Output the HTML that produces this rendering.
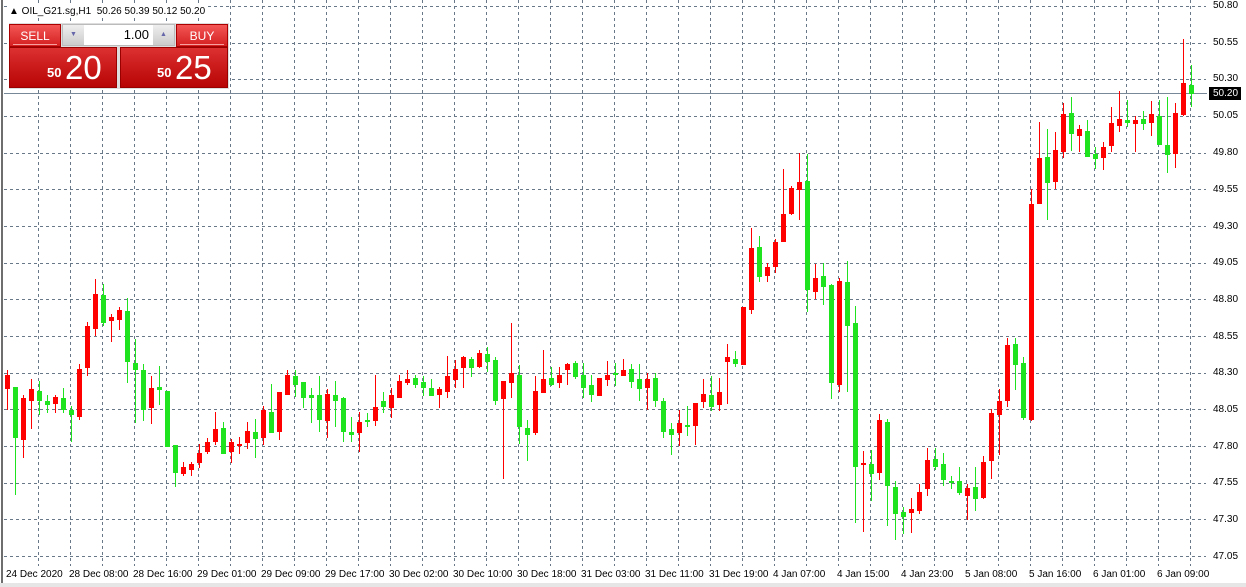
<!DOCTYPE html>
<html><head><meta charset="utf-8"><style>
*{margin:0;padding:0;box-sizing:border-box}
body{width:1246px;height:587px;background:#fff;position:relative;overflow:hidden;font-family:"Liberation Sans",sans-serif;font-size:10px;color:#000}
svg{position:absolute;left:0;top:0}
.pl{position:absolute;left:1213px;font-size:10px;line-height:12px}
.tl{position:absolute;top:569px;font-size:10px;line-height:12px;white-space:nowrap}
#title{position:absolute;left:9px;top:6px;font-size:10px;line-height:12px;white-space:nowrap;background:#fff}
.btn{position:absolute;top:24px;height:23px;background:linear-gradient(#f45656,#d42020);color:#fff;font-size:12px;text-align:center;line-height:22px;border:1px solid #a00}
.big{position:absolute;top:47px;height:41px;background:linear-gradient(#dc3030,#b80404);color:#fff;border:1px solid #900}
.big b{position:absolute;font-size:13px;top:17px}
.big span{position:absolute;font-size:33px;top:1px;line-height:38px}
</style></head><body>
<svg width="1246" height="587" id="s"></svg>
<div id="title">▲ OIL_G21.sg,H1&nbsp; 50.26 50.39 50.12 50.20</div>
<div style="position:absolute;left:9px;top:23px;width:220px;height:66px;background:#ddd"></div>
<div class="btn" style="left:9px;width:52px">SELL<div style="position:absolute;left:3px;right:3px;bottom:1px;height:1px;background:#f7a0a0"></div></div>
<div class="btn" style="left:176px;width:52px">BUY<div style="position:absolute;left:3px;right:3px;bottom:1px;height:1px;background:#f7a0a0"></div></div>
<div style="position:absolute;left:62px;top:24px;width:113px;height:22px;background:#fff;border:1px solid #bbb"></div>
<div style="position:absolute;left:63px;top:25px;width:21px;height:20px;background:linear-gradient(#eee,#ccc);font-size:7px;color:#66a;text-align:center;line-height:20px">▼</div>
<div style="position:absolute;left:153px;top:25px;width:21px;height:20px;background:linear-gradient(#eee,#ccc);font-size:7px;color:#66a;text-align:center;line-height:20px">▲</div>
<div style="position:absolute;left:84px;top:26px;width:65px;font-size:13px;text-align:right;line-height:18px">1.00</div>
<div class="big" style="left:9px;width:108px"><b style="left:37px">50</b><span style="left:55px">20</span></div>
<div class="big" style="left:120px;width:108px"><b style="left:36px">50</b><span style="left:54px">25</span></div>
<div style="position:absolute;left:1209px;top:87px;width:32px;height:13px;background:#000"></div>
<div class="pl" style="top:0px">50.80</div><div class="pl" style="top:37px">50.55</div><div class="pl" style="top:73px">50.30</div>
<div class="pl" style="top:88px;color:#fff">50.20</div>
<div class="pl" style="top:110px">50.05</div><div class="pl" style="top:147px">49.80</div><div class="pl" style="top:184px">49.55</div>
<div class="pl" style="top:221px">49.30</div><div class="pl" style="top:257px">49.05</div><div class="pl" style="top:294px">48.80</div>
<div class="pl" style="top:331px">48.55</div><div class="pl" style="top:367px">48.30</div><div class="pl" style="top:404px">48.05</div>
<div class="pl" style="top:441px">47.80</div><div class="pl" style="top:477px">47.55</div><div class="pl" style="top:514px">47.30</div>
<div class="pl" style="top:551px">47.05</div>
<div class="tl" style="left:6px">24 Dec 2020</div><div class="tl" style="left:69px">28 Dec 08:00</div><div class="tl" style="left:133px">28 Dec 16:00</div>
<div class="tl" style="left:197px">29 Dec 01:00</div><div class="tl" style="left:261px">29 Dec 09:00</div><div class="tl" style="left:325px">29 Dec 17:00</div>
<div class="tl" style="left:389px">30 Dec 02:00</div><div class="tl" style="left:453px">30 Dec 10:00</div><div class="tl" style="left:517px">30 Dec 18:00</div>
<div class="tl" style="left:581px">31 Dec 03:00</div><div class="tl" style="left:645px">31 Dec 11:00</div><div class="tl" style="left:709px">31 Dec 19:00</div>
<div class="tl" style="left:773px">4 Jan 07:00</div><div class="tl" style="left:837px">4 Jan 15:00</div><div class="tl" style="left:901px">4 Jan 23:00</div>
<div class="tl" style="left:965px">5 Jan 08:00</div><div class="tl" style="left:1029px">5 Jan 16:00</div><div class="tl" style="left:1093px">6 Jan 01:00</div>
<div class="tl" style="left:1157px">6 Jan 09:00</div>
<script>
var D="r,370,375,389,410;g,387,387,438,495;r,395,398,440,458;r,379,389,401,429;g,381,391,401,415;g,395,401,405,413;r,395,397,404,413;g,388,398,410,413;g,406,410,415,442;r,364,369,417,420;r,322,326,368,376;r,279,294,329,336;g,284,295,323,326;r,314,317,321,342;r,307,310,320,330;g,298,311,362,383;g,339,363,370,423;g,364,370,410,421;r,376,388,408,424;g,366,387,390,405;g,391,391,447,447;g,445,445,473,487;r,462,467,474,476;r,462,464,470,476;r,444,453,463,468;r,438,442,452,454;r,412,429,442,445;g,422,428,454,454;r,439,442,452,463;r,437,444,446,454;r,422,431,443,449;g,419,432,439,458;r,406,410,438,445;g,384,412,433,433;r,392,392,432,440;r,370,375,395,395;g,370,376,385,397;g,382,382,398,408;g,388,395,398,423;g,376,395,420,432;r,389,394,421,438;g,381,395,401,427;g,397,398,432,442;g,417,432,435,442;r,412,422,433,452;g,413,420,422,427;r,375,407,421,426;g,392,401,407,413;r,388,395,408,418;r,375,381,398,398;r,370,379,383,385;g,375,378,385,388;g,376,382,388,396;g,379,388,396,396;r,387,389,395,408;r,356,376,392,398;r,360,369,380,388;r,356,357,368,388;g,357,359,368,377;r,350,353,367,368;g,347,354,362,372;g,357,360,401,405;r,381,381,399,479;r,323,373,383,398;g,365,375,427,444;g,420,428,435,461;r,376,391,433,435;r,350,379,393,393;g,367,378,385,386;r,367,375,383,388;r,363,364,370,385;g,361,363,377,379;g,363,375,388,398;g,375,385,395,402;r,378,378,396,396;r,361,375,380,386;g,363,373,374,386;r,359,370,376,376;g,364,369,382,388;g,364,379,389,401;r,373,379,388,410;g,373,378,401,407;g,398,401,432,438;g,423,429,435,455;r,410,423,433,446;g,406,425,427,436;r,403,403,426,445;r,379,394,402,408;g,376,395,407,411;r,378,392,405,411;r,344,357,362,404;g,351,359,364,367;r,307,307,365,365;r,228,248,310,314;g,236,247,277,282;r,263,267,276,282;r,239,242,267,273;r,169,214,242,242;r,186,188,214,215;r,153,182,190,220;g,154,181,290,312;r,264,278,292,299;g,263,276,287,305;g,284,285,383,399;r,278,281,385,392;g,261,282,326,392;g,306,323,467,523;r,451,463,465,532;g,450,464,474,501;r,414,420,473,480;g,419,422,486,526;g,481,487,514,540;g,507,512,517,534;r,498,509,513,533;r,484,492,511,514;r,448,460,489,496;g,448,459,467,470;g,453,464,480,486;g,476,481,483,489;g,467,481,493,495;r,484,488,496,520;g,467,487,499,511;r,456,462,498,499;r,409,413,461,479;r,389,401,415,455;r,338,345,401,407;g,338,344,365,390;g,357,363,418,420;r,189,204,420,421;r,122,158,204,204;g,129,157,183,220;r,132,150,182,189;r,103,114,152,158;g,97,113,134,151;r,125,129,136,152;g,120,131,157,157;g,147,154,159,169;r,142,147,158,170;r,107,123,146,152;r,91,119,126,132;g,100,120,123,127;r,116,120,124,152;g,111,119,124,130;r,101,114,123,136;g,100,116,145,145;g,97,145,155,173;r,103,113,154,168;r,39,83,115,116;g,65,85,94,107".split(";");
var h='<rect x="1" y="0" width="2" height="587" fill="#6e6e6e"/><rect x="0" y="583" width="1246" height="4" fill="#e6e6e6"/>';
for(var k=0;k<16;k++){var y=Math.round(6+36.67*k)+0.5;h+='<line x1="4" y1="'+y+'" x2="1206" y2="'+y+'" stroke="#687888" stroke-dasharray="3,3"/>';}
for(var k=0;k<37;k++){var x=38.5+32*k;h+='<line x1="'+x+'" y1="0" x2="'+x+'" y2="566" stroke="#687888" stroke-dasharray="3,3"/>';}
h+='<line x1="4" y1="93.5" x2="1207" y2="93.5" stroke="#778899"/>';
for(var i=0;i<D.length;i++){var a=D[i].split(","),c=a[0]=="r"?"#ff0000":"#1ee31e",x=7+8*i;
var wt=+a[1],bt=+a[2],bb=+a[3],wb=+a[4];if(bb-bt<2)bb=bt+2;
h+='<rect x="'+x+'" y="'+wt+'" width="1" height="'+(wb-wt)+'" fill="'+c+'"/><rect x="'+(x-2)+'" y="'+bt+'" width="5" height="'+(bb-bt)+'" fill="'+c+'"/>';}
document.getElementById("s").innerHTML=h;
</script>
</body></html>
